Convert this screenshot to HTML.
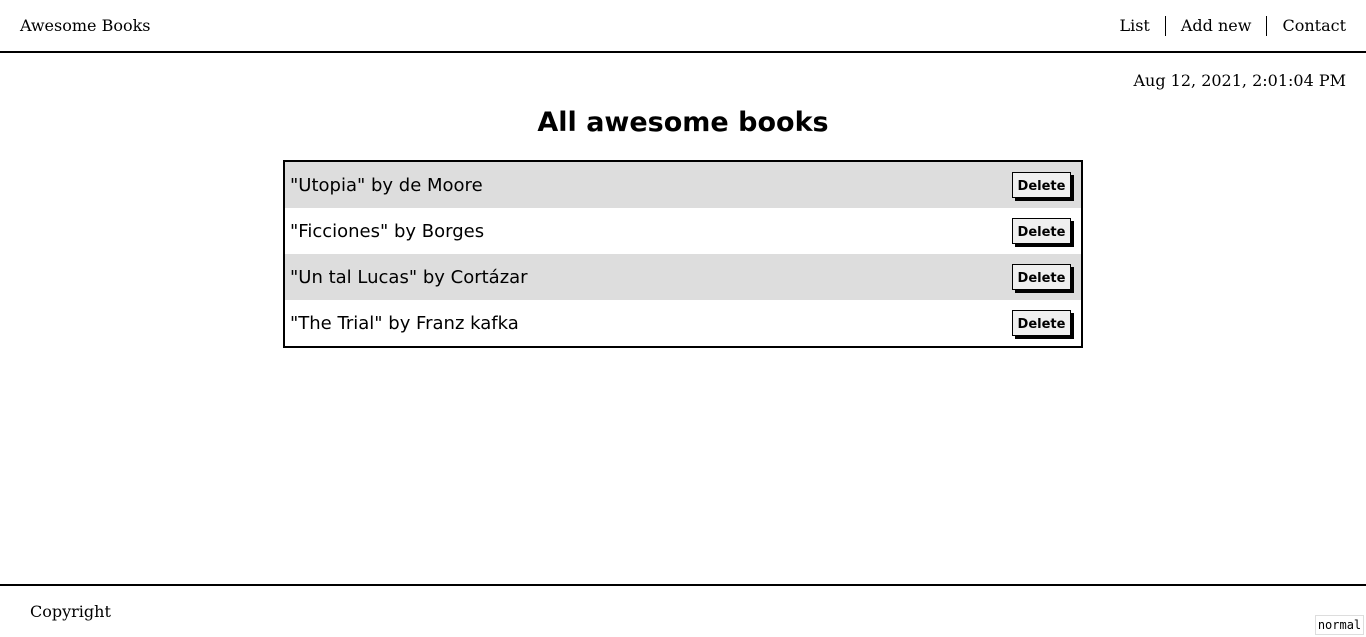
<!DOCTYPE html>
<html><head><style>
*{margin:0;padding:0;box-sizing:border-box}
body{width:1366px;height:637px;background:#fff;font-family:"DejaVu Serif",serif;position:relative;overflow:hidden;color:#000}
.hdr{position:absolute;left:0;top:0;width:1366px;height:53px;border-bottom:2px solid #000}
.logo{position:absolute;left:20px;top:16px;font-size:16px}
.nav{position:absolute;right:20px;top:16px;font-size:16px;display:flex}
.nav span{padding:0 15px;border-left:1px solid #000;line-height:20px}
.nav span:first-child{border-left:none;padding-left:0}
.nav span:last-child{padding-right:0}
.date{position:absolute;right:20px;top:71px;font-size:16px}
h1{position:absolute;left:0;width:1366px;text-align:center;top:107px;font-family:"DejaVu Sans",sans-serif;font-size:27px;font-weight:bold}
.list{position:absolute;left:283px;top:160px;width:800px;height:188px;border:2px solid #000}
.row{height:46px;position:relative;font-family:"DejaVu Sans",sans-serif;font-size:18px;padding-left:5px;line-height:48px}
.row:nth-child(odd){background:#ddd}
.btn{position:absolute;left:727px;top:10px;width:59px;height:26px;background:#efefef;border:1px solid #000;box-shadow:3px 3px 0 #000;font-size:13px;font-weight:bold;line-height:27px;text-align:center}
.ftr{position:absolute;left:0;top:584px;width:1366px;border-top:2px solid #000}
.copy{position:absolute;left:30px;top:602px;font-size:16px}
.norm{position:absolute;left:1315px;top:615px;width:49px;height:20px;border:1px solid #ddd;font-family:"DejaVu Sans Mono",monospace;font-size:12px;line-height:18px;text-align:center}
</style></head><body>
<div class="hdr"><div class="logo">Awesome Books</div>
<div class="nav"><span>List</span><span>Add new</span><span>Contact</span></div></div>
<div class="date">Aug 12, 2021, 2:01:04 PM</div>
<h1>All awesome books</h1>
<div class="list">
<div class="row">"Utopia" by de Moore<div class="btn">Delete</div></div>
<div class="row">"Ficciones" by Borges<div class="btn">Delete</div></div>
<div class="row">"Un tal Lucas" by Cortázar<div class="btn">Delete</div></div>
<div class="row">"The Trial" by Franz kafka<div class="btn">Delete</div></div>
</div>
<div class="ftr"></div>
<div class="copy">Copyright</div>
<div class="norm">normal</div>
</body></html>
